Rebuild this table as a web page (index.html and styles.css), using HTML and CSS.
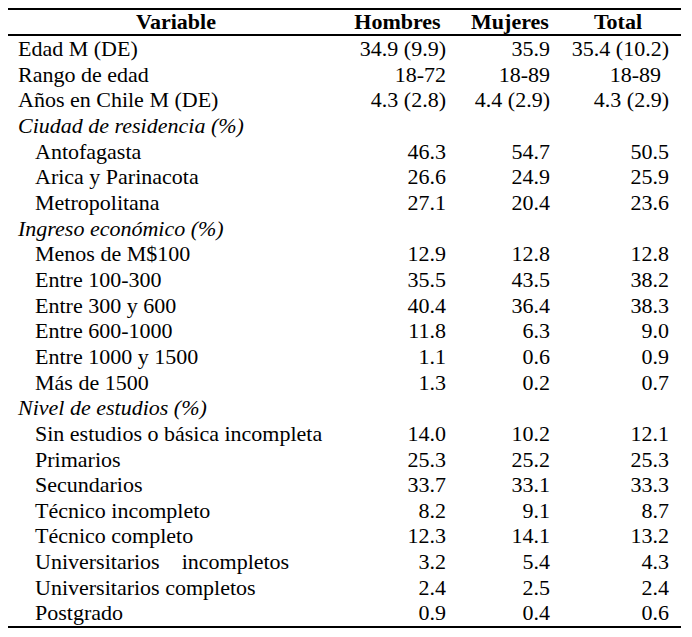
FILE: index.html
```html
<!DOCTYPE html>
<html lang="es">
<head>
<meta charset="utf-8">
<title>Tabla</title>
<link rel="stylesheet" href="styles.css">
</head>
<body class="page">
<table class="data">
  <colgroup>
    <col class="c1"><col class="c2"><col class="c3"><col class="c4">
  </colgroup>
  <thead>
    <tr>
      <th class="h-var">Variable</th>
      <th class="h-hom">Hombres</th>
      <th class="h-muj">Mujeres</th>
      <th class="h-tot">Total</th>
    </tr>
  </thead>
  <tbody>
    <tr><td class="lab">Edad M (DE)</td><td>34.9 (9.9)</td><td>35.9</td><td>35.4 (10.2)</td></tr>
    <tr><td class="lab">Rango de edad</td><td>18-72</td><td>18-89</td><td class="shift">18-89</td></tr>
    <tr><td class="lab">Años en Chile M (DE)</td><td>4.3 (2.8)</td><td>4.4 (2.9)</td><td>4.3 (2.9)</td></tr>
    <tr><td class="lab sec">Ciudad de residencia (%)</td><td></td><td></td><td></td></tr>
    <tr><td class="lab sub">Antofagasta</td><td>46.3</td><td>54.7</td><td>50.5</td></tr>
    <tr><td class="lab sub">Arica y Parinacota</td><td>26.6</td><td>24.9</td><td>25.9</td></tr>
    <tr><td class="lab sub">Metropolitana</td><td>27.1</td><td>20.4</td><td>23.6</td></tr>
    <tr><td class="lab sec">Ingreso económico (%)</td><td></td><td></td><td></td></tr>
    <tr><td class="lab sub">Menos de M$100</td><td>12.9</td><td>12.8</td><td>12.8</td></tr>
    <tr><td class="lab sub">Entre 100-300</td><td>35.5</td><td>43.5</td><td>38.2</td></tr>
    <tr><td class="lab sub">Entre 300 y 600</td><td>40.4</td><td>36.4</td><td>38.3</td></tr>
    <tr><td class="lab sub">Entre 600-1000</td><td>11.8</td><td>6.3</td><td>9.0</td></tr>
    <tr><td class="lab sub">Entre 1000 y 1500</td><td>1.1</td><td>0.6</td><td>0.9</td></tr>
    <tr><td class="lab sub">Más de 1500</td><td>1.3</td><td>0.2</td><td>0.7</td></tr>
    <tr><td class="lab sec">Nivel de estudios (%)</td><td></td><td></td><td></td></tr>
    <tr><td class="lab sub">Sin estudios o básica incompleta</td><td>14.0</td><td>10.2</td><td>12.1</td></tr>
    <tr><td class="lab sub">Primarios</td><td>25.3</td><td>25.2</td><td>25.3</td></tr>
    <tr><td class="lab sub">Secundarios</td><td>33.7</td><td>33.1</td><td>33.3</td></tr>
    <tr><td class="lab sub">Técnico incompleto</td><td>8.2</td><td>9.1</td><td>8.7</td></tr>
    <tr><td class="lab sub">Técnico completo</td><td>12.3</td><td>14.1</td><td>13.2</td></tr>
    <tr><td class="lab sub">Universitarios&nbsp;&nbsp;&nbsp;&nbsp;incompletos</td><td>3.2</td><td>5.4</td><td>4.3</td></tr>
    <tr><td class="lab sub">Universitarios completos</td><td>2.4</td><td>2.5</td><td>2.4</td></tr>
    <tr><td class="lab sub">Postgrado</td><td>0.9</td><td>0.4</td><td>0.6</td></tr>
  </tbody>
</table>
</body>
</html>
```

FILE: styles.css
```css
html, body {
  background: #ffffff;
}
.page {
  margin: 8px;
  color: #000000;
}
.data, .data th, .data td {
  font-family: "Liberation Serif", serif;
  font-size: 22px;
}
.data {
  border-collapse: collapse;
  table-layout: fixed;
  width: 673px;
  border-top: 2px solid #000;
  border-bottom: 2px solid #000;
}
.c1 { width: 336px; }
.c2 { width: 107px; }
.c3 { width: 104px; }
.c4 { width: 126px; }
.data thead tr {
  border-bottom: 2px solid #000;
}
.data th {
  font-weight: bold;
  height: 24px;
  line-height: 24px;
  padding: 0;
  text-align: center;
  white-space: nowrap;
}
.data th.h-muj { padding-left: 14px; }
.data td {
  height: 25.65px;
  line-height: 25.65px;
  padding: 0 5px 0 0;
  text-align: right;
  white-space: nowrap;
}
.data td:nth-child(4) { padding-right: 12px; }
.data td.shift { padding-right: 20px; }
.data td.lab {
  text-align: left;
  padding-left: 10px;
}
.data td.sec { font-style: italic; }
.data td.sub { padding-left: 27px; }
```
